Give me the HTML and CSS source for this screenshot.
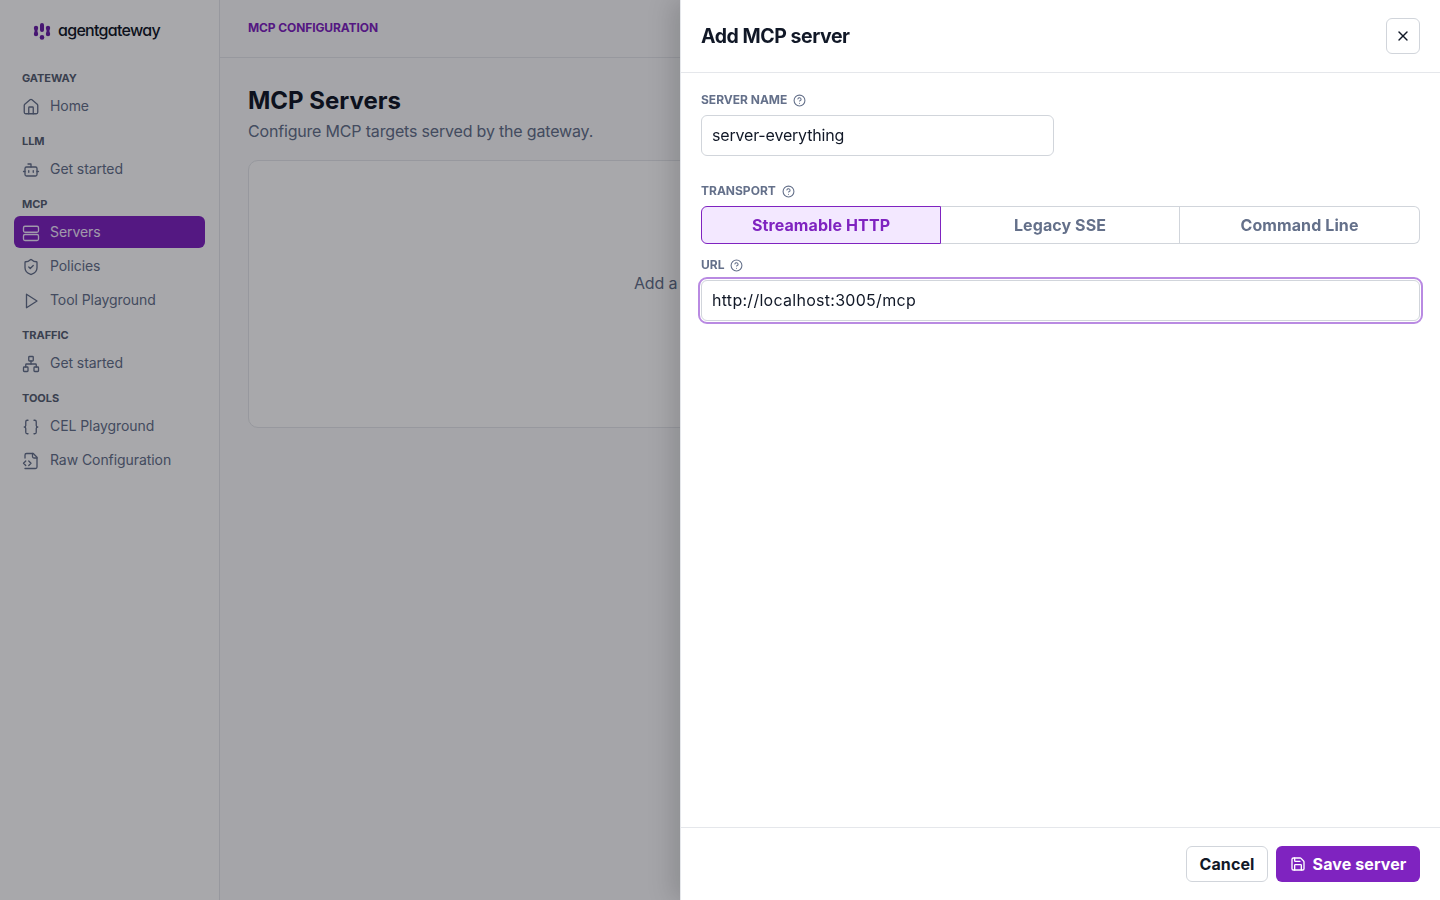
FILE: index.html
```html
<!DOCTYPE html>
<html lang="en">
<head>
    <meta charset="UTF-8">
    <title>agentgateway - MCP Servers</title>
    <link rel="stylesheet" href="styles.css">
</head>
<body>

    <div class="shell">
        <!-- Sidebar -->
        <aside class="sidebar">
            <div class="logo">
                <svg class="logo-mark" width="18" height="18" viewBox="0 0 18 18" fill="#6b21a8">
                    <circle cx="3" cy="6" r="2.2"/>
                    <circle cx="3" cy="12" r="2.2"/>
                    <rect x="1.5" y="5" width="3" height="8"/>
                    <rect x="7" y="1" width="4" height="9" rx="2"/>
                    <circle cx="9" cy="15.4" r="2.3"/>
                    <circle cx="15" cy="6" r="2.2"/>
                    <circle cx="15" cy="12" r="2.2"/>
                    <rect x="13.5" y="5" width="3" height="8"/>
                </svg>
                <span class="logo-text">agentgateway</span>
            </div>

            <div class="nav-section">
                <div class="nav-label">GATEWAY</div>
                <a href="#" class="nav-item">
                    <svg class="nav-icon" viewBox="0 0 24 24"><path d="M15 21v-8a1 1 0 0 0-1-1h-4a1 1 0 0 0-1 1v8"/><path d="M3 10a2 2 0 0 1 .709-1.528l7-6a2 2 0 0 1 2.582 0l7 6A2 2 0 0 1 21 10v9a2 2 0 0 1-2 2H5a2 2 0 0 1-2-2z"/></svg>
                    Home
                </a>
            </div>

            <div class="nav-section">
                <div class="nav-label">LLM</div>
                <a href="#" class="nav-item">
                    <svg class="nav-icon" viewBox="0 0 24 24"><path d="M12 8V4H8"/><rect width="16" height="12" x="4" y="8" rx="2"/><path d="M2 14h2"/><path d="M20 14h2"/><path d="M15 13v2"/><path d="M9 13v2"/></svg>
                    Get started
                </a>
            </div>

            <div class="nav-section">
                <div class="nav-label">MCP</div>
                <a href="#" class="nav-item active">
                    <svg class="nav-icon" viewBox="0 0 24 24"><rect width="20" height="8" x="2" y="3" rx="2"/><rect width="20" height="8" x="2" y="14" rx="2"/></svg>
                    Servers
                </a>
                <a href="#" class="nav-item">
                    <svg class="nav-icon" viewBox="0 0 24 24"><path d="M20 13c0 5-3.5 7.5-7.66 8.95a1 1 0 0 1-.67-.01C7.5 20.5 4 18 4 13V6a1 1 0 0 1 1-1c2 0 4.5-1.2 6.24-2.72a1.17 1.17 0 0 1 1.52 0C14.51 3.81 17 5 19 5a1 1 0 0 1 1 1z"/><path d="m9 12 2 2 4-4"/></svg>
                    Policies
                </a>
                <a href="#" class="nav-item">
                    <svg class="nav-icon" viewBox="0 0 24 24"><polygon points="6 3 20 12 6 21 6 3"/></svg>
                    Tool Playground
                </a>
            </div>

            <div class="nav-section">
                <div class="nav-label">TRAFFIC</div>
                <a href="#" class="nav-item">
                    <svg class="nav-icon" viewBox="0 0 24 24"><rect x="16" y="16" width="6" height="6" rx="1"/><rect x="2" y="16" width="6" height="6" rx="1"/><rect x="9" y="2" width="6" height="6" rx="1"/><path d="M5 16v-3a1 1 0 0 1 1-1h12a1 1 0 0 1 1 1v3"/><path d="M12 12V8"/></svg>
                    Get started
                </a>
            </div>

            <div class="nav-section">
                <div class="nav-label">TOOLS</div>
                <a href="#" class="nav-item">
                    <svg class="nav-icon" viewBox="0 0 24 24"><path d="M8 3H7a2 2 0 0 0-2 2v5a2 2 0 0 1-2 2 2 2 0 0 1 2 2v5c0 1.1.9 2 2 2h1"/><path d="M16 21h1a2 2 0 0 0 2-2v-5c0-1.1.9-2 2-2a2 2 0 0 1-2-2V5a2 2 0 0 0-2-2h-1"/></svg>
                    CEL Playground
                </a>
                <a href="#" class="nav-item">
                    <svg class="nav-icon" viewBox="0 0 24 24"><path d="M4 22h14a2 2 0 0 0 2-2V7l-5-5H6a2 2 0 0 0-2 2v4"/><path d="M14 2v4a2 2 0 0 0 2 2h4"/><path d="m5 12-3 3 3 3"/><path d="m9 18 3-3-3-3"/></svg>
                    Raw Configuration
                </a>
            </div>
        </aside>

        <!-- Contenido -->
        <main class="main">
            <header class="topbar">MCP CONFIGURATION</header>
            <div class="content">
                <h1>MCP Servers</h1>
                <p class="subtitle">Configure MCP targets served by the gateway.</p>
                <div class="empty-card">Add a server to start serving MCP tools to all clients.</div>
            </div>
        </main>
    </div>

    <div class="overlay"></div>

    <!-- Drawer -->
    <section class="drawer">
        <div class="drawer-head">
            <h2>Add MCP server</h2>
            <button type="button" class="close-btn">
                <svg width="16" height="16" viewBox="0 0 24 24" fill="none" stroke="currentColor" stroke-width="2" stroke-linecap="round" stroke-linejoin="round"><path d="M18 6 6 18"/><path d="m6 6 12 12"/></svg>
            </button>
        </div>

        <div class="drawer-body">
            <label class="field-label">
                SERVER NAME
                <svg class="help" viewBox="0 0 24 24"><circle cx="12" cy="12" r="10"/><path d="M9.09 9a3 3 0 0 1 5.83 1c0 2-3 3-3 3"/><path d="M12 17h.01"/></svg>
            </label>
            <input type="text" class="text-input name-input" value="server-everything">

            <label class="field-label transport-label">
                TRANSPORT
                <svg class="help" viewBox="0 0 24 24"><circle cx="12" cy="12" r="10"/><path d="M9.09 9a3 3 0 0 1 5.83 1c0 2-3 3-3 3"/><path d="M12 17h.01"/></svg>
            </label>
            <div class="segments">
                <button type="button" class="segment selected">Streamable HTTP</button>
                <button type="button" class="segment">Legacy SSE</button>
                <button type="button" class="segment">Command Line</button>
            </div>

            <label class="field-label url-label">
                URL
                <svg class="help" viewBox="0 0 24 24"><circle cx="12" cy="12" r="10"/><path d="M9.09 9a3 3 0 0 1 5.83 1c0 2-3 3-3 3"/><path d="M12 17h.01"/></svg>
            </label>
            <input type="text" class="text-input url-input" value="http://localhost:3005/mcp">
        </div>

        <div class="drawer-foot">
            <button type="button" class="btn btn-cancel">Cancel</button>
            <button type="button" class="btn btn-save">
                <svg width="16" height="16" viewBox="0 0 24 24" fill="none" stroke="currentColor" stroke-width="2" stroke-linecap="round" stroke-linejoin="round"><path d="M15.2 3a2 2 0 0 1 1.4.6l3.8 3.8a2 2 0 0 1 .6 1.4V19a2 2 0 0 1-2 2H5a2 2 0 0 1-2-2V5a2 2 0 0 1 2-2z"/><path d="M17 21v-7a1 1 0 0 0-1-1H8a1 1 0 0 0-1 1v7"/><path d="M7 3v4a1 1 0 0 0 1 1h7"/></svg>
                Save server
            </button>
        </div>
    </section>

</body>
</html>
```

FILE: styles.css
```css
* {
    margin: 0;
    padding: 0;
    box-sizing: border-box;
}

html, body {
    height: 100%;
    overflow: hidden;
}

body {
    font-family: Inter, "Liberation Sans", sans-serif;
    color: #111827;
    background-color: #fafbfc;
}

button, input {
    font-family: inherit;
}

.shell {
    display: flex;
    height: 900px;
}

/* Sidebar */
.sidebar {
    width: 220px;
    flex-shrink: 0;
    padding: 0 14px;
    background: #ffffff;
    border-right: 1px solid #e5e7eb;
}

.logo {
    display: flex;
    align-items: center;
    gap: 7px;
    height: 62px;
    padding-left: 19px;
}

.logo-text {
    margin-bottom: 2px;
    font-size: 16px;
    font-weight: 500;
    letter-spacing: -0.7px;
    font-feature-settings: "cv11";
    color: #111827;
}

.nav-section {
    margin-top: 8px;
    margin-bottom: 11px;
}

.nav-label {
    height: 16px;
    line-height: 16px;
    margin-bottom: 4px;
    padding-left: 8px;
    font-size: 11px;
    font-weight: 700;
    letter-spacing: -0.05px;
    color: #566072;
}

.nav-section + .nav-section {
    margin-top: 0;
}

.nav-item {
    display: flex;
    align-items: center;
    gap: 10px;
    height: 32px;
    margin-bottom: 2px;
    padding: 0 0 2px 8px;
    border-radius: 6px;
    font-size: 14px;
    letter-spacing: -0.07px;
    color: #64708a;
    text-decoration: none;
}

.nav-item:last-child {
    margin-bottom: 0;
}

.nav-item.active {
    background: #7f23c0;
    color: #f3e8ff;
}

.nav-icon {
    width: 18px;
    height: 18px;
    margin-top: 3px;
    fill: none;
    stroke: currentColor;
    stroke-width: 1.75;
    stroke-linecap: round;
    stroke-linejoin: round;
}

/* Contenido */
.main {
    flex: 1;
}

.topbar {
    height: 58px;
    padding: 20px 28px 0;
    border-bottom: 1px solid #e5e7eb;
    font-size: 12px;
    line-height: 16px;
    font-weight: 700;
    letter-spacing: -0.1px;
    color: #7f23c0;
}

.content {
    padding: 28px 28px 0;
}

h1 {
    font-size: 24px;
    line-height: 30px;
    font-weight: 700;
    color: #111827;
}

.subtitle {
    margin-top: 3px;
    font-size: 16px;
    line-height: 24px;
    letter-spacing: -0.18px;
    color: #64708a;
}

.empty-card {
    display: flex;
    align-items: center;
    justify-content: center;
    height: 268px;
    margin-top: 17px;
    padding: 0 6px 22px 0;
    background: #ffffff;
    border: 1px solid #e5e7eb;
    border-radius: 10px;
    font-size: 16px;
    letter-spacing: -0.18px;
    color: #64708a;
}

/* Overlay y drawer */
.overlay {
    position: fixed;
    inset: 0;
    background: rgba(5, 6, 15, 0.35);
}

.drawer {
    position: fixed;
    top: 0;
    right: 0;
    bottom: 0;
    width: 760px;
    display: flex;
    flex-direction: column;
    background: #ffffff;
    border-left: 1px solid #e5e7eb;
    box-shadow: -8px 0 24px rgba(0, 0, 0, 0.15);
}

.drawer-head {
    display: flex;
    align-items: center;
    justify-content: space-between;
    height: 73px;
    padding: 0 20px;
    border-bottom: 1px solid #e5e7eb;
}

.drawer-head h2 {
    font-size: 19.5px;
    font-weight: 700;
    letter-spacing: -0.45px;
    color: #111827;
}

.close-btn {
    display: flex;
    align-items: center;
    justify-content: center;
    width: 34px;
    height: 36px;
    background: #fff;
    border: 1px solid #d1d5db;
    border-radius: 6px;
    color: #111827;
}

.drawer-body {
    flex: 1;
    padding: 19px 20px 0;
}

.field-label {
    display: flex;
    align-items: center;
    gap: 6px;
    height: 16px;
    padding-bottom: 2px;
    font-size: 12px;
    font-weight: 700;
    color: #64708a;
}

.help {
    width: 13px;
    height: 13px;
    margin-top: 2px;
    fill: none;
    stroke: currentColor;
    stroke-width: 2;
    stroke-linecap: round;
    stroke-linejoin: round;
}

.text-input {
    display: block;
    width: 100%;
    height: 41px;
    padding: 0 10px 2px;
    margin-top: 7px;
    background: #fff;
    border: 1px solid #d1d5db;
    border-radius: 6px;
    font-size: 16px;
    color: #111827;
}

.name-input {
    width: 353px;
    letter-spacing: -0.18px;
}

.url-input {
    letter-spacing: 0.28px;
    outline: 2px solid #b98ae2;
    outline-offset: 1px;
}

.transport-label {
    margin-top: 27px;
}

.segments {
    display: flex;
    height: 38px;
    margin-top: 7px;
}

.segment {
    flex: 1;
    background: #fff;
    border: 1px solid #d1d5db;
    border-left-width: 0;
    font-size: 16px;
    font-weight: 700;
    letter-spacing: 0.1px;
    color: #64708a;
}

.segment:nth-child(2) {
    flex: 0 0 239px;
}

.segment:last-child {
    border-radius: 0 6px 6px 0;
}

.segment.selected {
    flex: 0 0 240px;
    background: #f3e8ff;
    border: 1px solid #7f23c0;
    border-radius: 6px 0 0 6px;
    color: #7f23c0;
}

.url-label {
    margin-top: 13px;
}

.drawer-foot {
    display: flex;
    justify-content: flex-end;
    gap: 8px;
    height: 73px;
    padding: 18px 20px 0;
    border-top: 1px solid #e5e7eb;
}

.btn {
    display: flex;
    align-items: center;
    justify-content: center;
    gap: 7px;
    height: 36px;
    border-radius: 6px;
    font-size: 16px;
    font-weight: 700;
    letter-spacing: 0.1px;
}

.btn-cancel {
    width: 82px;
    background: #fff;
    border: 1px solid #d1d5db;
    color: #111827;
}

.btn-save {
    width: 144px;
    background: #7f23c0;
    border: none;
    color: #fff;
}
```
